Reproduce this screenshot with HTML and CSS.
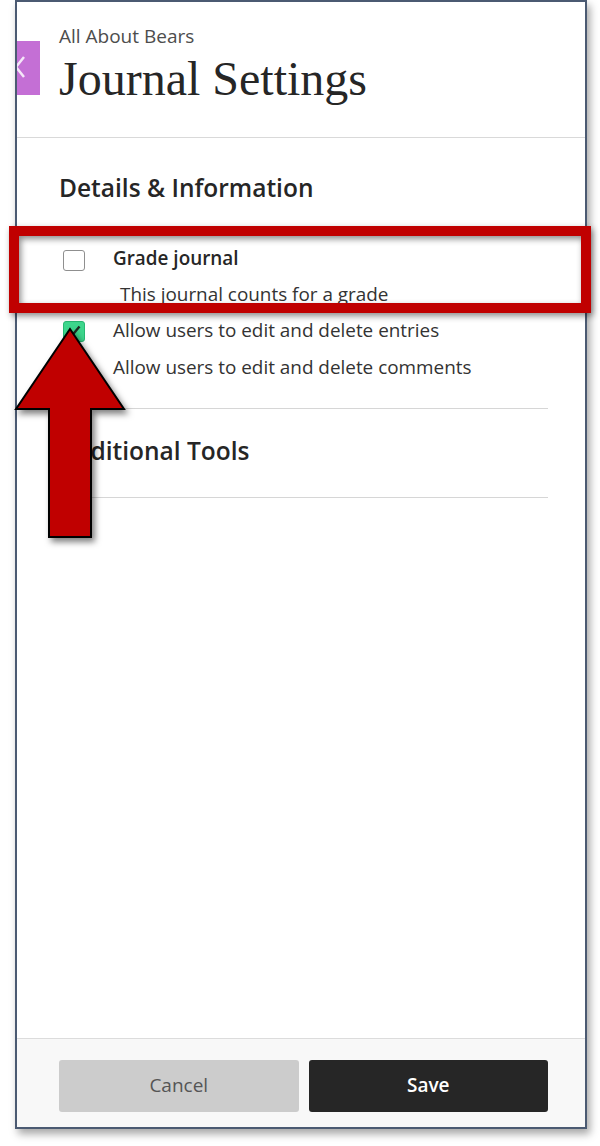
FILE: index.html
```html
<!DOCTYPE html>
<html lang="en">
<head>
<meta charset="utf-8">
<title>Journal Settings</title>
<link rel="stylesheet" href="styles.css">
</head>
<body>
<div class="stage">
  <div class="panel">
    <div class="tab">
      <svg width="23" height="54" viewBox="0 0 23 54"><polyline points="7,16 -1,26 7,36" fill="none" stroke="#f4e6f8" stroke-width="2.5"/></svg>
    </div>
    <header class="panel-header">
      <div class="crumb">All About Bears</div>
      <h1 class="title">Journal Settings</h1>
    </header>
    <main class="panel-body">
      <h2 class="section-title">Details &amp; Information</h2>
      <div class="options">
        <div class="option option-first">
          <span class="checkbox"></span>
          <span class="option-label strong">Grade journal</span>
        </div>
        <div class="option-desc">This journal counts for a grade</div>
        <div class="option">
          <span class="checkbox checked"><svg width="19" height="18" viewBox="0 0 19 18"><path d="M4 9.5 L8 13.5 L15.5 4.5" fill="none" stroke="#1d2a22" stroke-width="2.4"/></svg></span>
          <span class="option-label">Allow users to edit and delete entries</span>
        </div>
        <div class="option option-last">
          <span class="checkbox checked"><svg width="19" height="18" viewBox="0 0 19 18"><path d="M4 9.5 L8 13.5 L15.5 4.5" fill="none" stroke="#1d2a22" stroke-width="2.4"/></svg></span>
          <span class="option-label">Allow users to edit and delete comments</span>
        </div>
      </div>
      <hr class="divider divider-first">
      <h2 class="section-title section-second">Additional Tools</h2>
      <hr class="divider divider-second">
    </main>
    <footer class="panel-footer">
      <button class="btn btn-cancel" type="button">Cancel</button>
      <button class="btn btn-save" type="button">Save</button>
    </footer>
  </div>
  <div class="highlight"></div>
  <svg class="arrow" width="130" height="230" viewBox="10 320 130 230">
    <polygon points="70,329 124,409 91,409 91,537 49,537 49,409 16,409" fill="#c00000" stroke="#000" stroke-width="2"/>
  </svg>
</div>
</body>
</html>
```
FILE: styles.css
```css
* { box-sizing: border-box; }

body {
  margin: 0;
  background: #ffffff;
  font-family: "Open Sans", "Noto Sans", sans-serif;
  color: #333333;
}

.stage {
  position: relative;
  width: 600px;
  height: 1146px;
  overflow: hidden;
}

.panel {
  position: relative;
  margin-left: 15px;
  width: 572px;
  height: 1129px;
  border: 2px solid #4b5a72;
  background: #ffffff;
  display: flex;
  flex-direction: column;
  box-shadow: 3px 5px 8px rgba(0, 0, 0, 0.35);
}

.tab {
  position: absolute;
  left: 0;
  top: 39px;
  width: 23px;
  height: 54px;
  background: #c46fd5;
}

.tab svg { display: block; }

.panel-header {
  padding: 22px 0 30px 42px;
  border-bottom: 1px solid #d9d9d9;
}

.crumb {
  font-size: 19px;
  line-height: 24px;
  color: #4d4d4d;
}

.title {
  margin: 3px 0 0;
  font-family: "Liberation Serif", serif;
  font-weight: 400;
  font-size: 48px;
  line-height: 56px;
  color: #262626;
}

.panel-body {
  flex: 1;
  padding: 34px 37px 0 42px;
}

.section-title {
  margin: 0;
  font-size: 24.5px;
  font-weight: 600;
  line-height: 32px;
  color: #262626;
}

.section-second { margin-top: 26px; }

.options { margin-top: 37px; }

.option {
  display: flex;
  align-items: flex-start;
  height: 36px;
  line-height: 36px;
  font-size: 18.9px;
}

.option-first { height: 35px; line-height: 35px; }
.option-last { margin-top: 1px; }

.checkbox {
  flex: none;
  width: 22px;
  height: 21px;
  margin: 9px 28px 0 4px;
  border: 1.5px solid #8f8f8f;
  border-radius: 3px;
  background: #ffffff;
}

.checkbox svg { display: block; }

.checkbox.checked {
  background: #3dd68c;
  border-color: #27b873;
}

.strong {
  font-weight: 600;
  color: #262626;
}

.option-desc {
  height: 36px;
  line-height: 36px;
  font-size: 18.9px;
  padding-left: 61px;
}

.divider {
  border: 0;
  height: 1px;
  background: #d6d6d6;
  margin: 0;
}

.divider-first { margin-top: 23px; }
.divider-second { margin-top: 30px; }

.panel-footer {
  border-top: 1px solid #dcdcdc;
  background: #f8f8f8;
  padding: 21px 37px 15px 42px;
  display: grid;
  grid-template-columns: 1fr 1fr;
  gap: 10px;
}

.btn {
  height: 52px;
  border: 0;
  border-radius: 3px;
  font-family: inherit;
  font-size: 19px;
  padding-bottom: 3px;
}

.btn-cancel {
  background: #cccccc;
  color: #555555;
}

.btn-save {
  background: #262626;
  color: #ffffff;
  font-weight: 600;
}

.highlight {
  position: absolute;
  left: 9px;
  top: 226px;
  width: 582px;
  height: 87px;
  border: 10px solid #c00000;
  filter: drop-shadow(2px 3px 3px rgba(0, 0, 0, 0.45));
}

.arrow {
  position: absolute;
  left: 10px;
  top: 320px;
  filter: drop-shadow(3px 4px 3px rgba(0, 0, 0, 0.5));
}
```
